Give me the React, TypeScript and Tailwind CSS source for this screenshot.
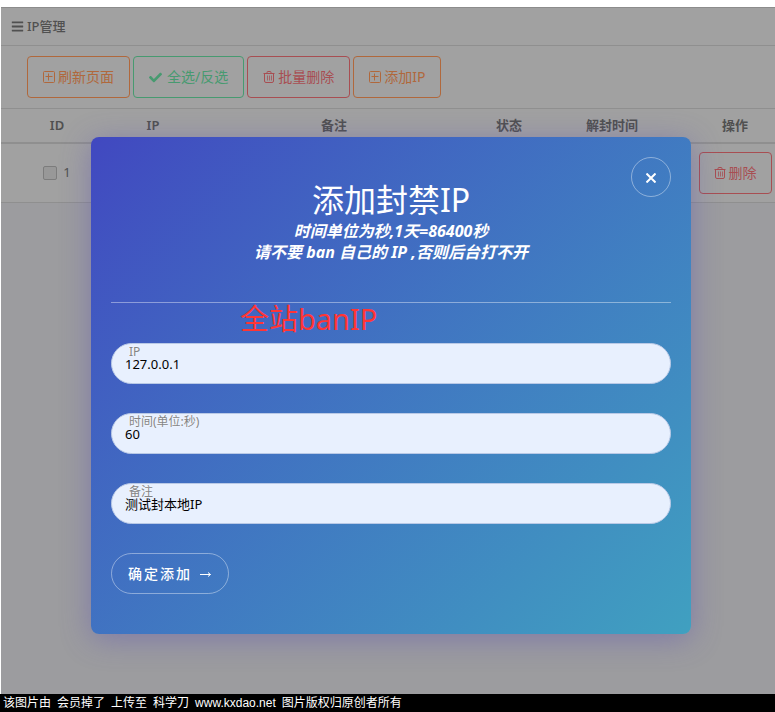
import React from "react";
import { FaBars, FaCheck } from "react-icons/fa";

function PlusBox() {
  return (
    <svg className="size-3 shrink-0" viewBox="0 0 12 12" fill="none" stroke="currentColor" aria-hidden="true">
      <rect x="0.5" y="0.5" width="11" height="11" rx="1" />
      <path d="M5.5 2.5v7M2.5 5.5h7" />
    </svg>
  );
}

function Trash() {
  return (
    <svg className="size-3 shrink-0" viewBox="0 0 12 12" fill="none" stroke="currentColor" aria-hidden="true">
      <path d="M0.5 2.5h11M4 2.5V1.5q0-1 1-1h2q1 0 1 1v1M1.5 2.5v7.5q0 1.5 1.5 1.5h6q1.5 0 1.5-1.5V2.5" />
      <path strokeOpacity="0.75" d="M4.5 4.5v5M6.5 4.5v5M8.5 4.5v5" />
    </svg>
  );
}

type OutlineButtonProps = { tone: string; icon: React.ReactNode; children: React.ReactNode };

function OutlineButton({ tone, icon, children }: OutlineButtonProps) {
  return (
    <button
      type="button"
      className={`inline-flex h-[42px] shrink-0 items-center gap-[3px] rounded border text-sm whitespace-nowrap ${tone}`}
    >
      {icon}
      {children}
    </button>
  );
}

const orange = "px-[15px] border-[#b0683c] text-[#b0683c]";
const green = "px-[15px] border-[#479a70] text-[#479a70]";
const red = "px-[15px] border-[#a84e52] text-[#a84e52]";
const rowRed = "px-[14px] border-[#a84e52] text-[#a84e52]";

type FieldProps = { id: string; label: string; value: string };

function Field({ id, label, value }: FieldProps) {
  return (
    <div className="relative">
      <label
        htmlFor={id}
        className="absolute top-px left-4 px-0.5 text-xs leading-4 text-[#858585] [text-shadow:0_0_2px_white]"
      >
        {label}
      </label>
      <input
        id={id}
        type="text"
        defaultValue={value}
        className="block h-[41px] w-full rounded-full border border-[#b9c9e6] bg-[#e8f0fe] px-[13px] text-[13px] text-black outline-none"
      />
    </div>
  );
}

function AddBanDialog() {
  return (
    <section
      role="dialog"
      aria-labelledby="dialog-title"
      className="relative w-full max-w-[600px] rounded-lg bg-linear-135 from-[#4148c0] to-[#40a0c0] px-5 pb-10 shadow-[0_5px_30px_rgba(90,80,180,0.45)]"
    >
      <button
        type="button"
        aria-label="关闭"
        className="absolute top-5 right-5 flex size-10 items-center justify-center rounded-full border border-white/40 text-white"
      >
        <svg className="mt-0.5 size-[10px]" viewBox="0 0 10 10" stroke="currentColor" strokeWidth="2" aria-hidden="true">
          <path d="M0.5 0.5l9 9M9.5 0.5l-9 9" />
        </svg>
      </button>
      <header className="border-b border-white/40 pt-[42px] pb-[39px] text-center text-white">
        <h1 id="dialog-title" className="text-[32px] leading-[42px]">添加封禁IP</h1>
        <p className="text-base leading-[21px] font-bold italic">
          时间单位为秒,1天=86400秒
          <br />
          请不要 ban 自己的 IP ,否则后台打不开
        </p>
      </header>
      <p className="absolute top-[162px] left-[149px] text-[29px] leading-10 text-[#ff3535]">全站banIP</p>
      <form className="mt-10 flex flex-col items-start gap-[29px] *:w-full" onSubmit={(e) => e.preventDefault()}>
        <Field id="ip" label="IP" value="127.0.0.1" />
        <Field id="duration" label="时间(单位:秒)" value="60" />
        <Field id="remark" label="备注" value="测试封本地IP" />
        <div>
          <button
            type="submit"
            className="flex h-[41px] items-center gap-2 rounded-full border border-white/40 px-4 text-sm font-medium tracking-[2px] whitespace-nowrap text-white"
          >
            确定添加
            <svg className="h-3 w-3" viewBox="0 0 12 12" fill="none" stroke="currentColor" aria-hidden="true">
              <path d="M0 6.5h10.5M8 4.5l2.5 2L8 8.5" />
            </svg>
          </button>
        </div>
      </form>
    </section>
  );
}

export default function App() {
  return (
    <div className="flex min-h-screen flex-col bg-white font-['Noto_Sans','Noto_Sans_CJK_SC',sans-serif]">
      <div className="relative mt-[7px] ml-px flex grow flex-col overflow-hidden border-t border-[#8c8c8c] bg-[#9c9c9f] text-[#505050]">
        <main className="bg-[#a1a1a1]">
          <h2 className="flex h-[38px] items-center gap-[3px] border-b border-[#8f8f8f] pl-[10px] text-[13px] font-medium">
            <FaBars className="size-[13px]" />
            IP管理
          </h2>
          <div className="flex gap-[3px] border-b border-[#8f8f8f] py-[10px] pl-[26px]">
            <OutlineButton tone={orange} icon={<PlusBox />}>刷新页面</OutlineButton>
            <OutlineButton tone={green} icon={<FaCheck className="mr-0.5 size-[13px]" />}>全选/反选</OutlineButton>
            <OutlineButton tone={red} icon={<Trash />}>批量删除</OutlineButton>
            <OutlineButton tone={orange} icon={<PlusBox />}>添加IP</OutlineButton>
          </div>
          <table className="w-full table-fixed border-collapse text-center text-[13px]">
            <thead>
              <tr className="h-[34px] border-b-2 border-[#8f8f8f] *:font-semibold">
                <th className="w-[126px] pr-[14px]">ID</th>
                <th className="w-[52px]">IP</th>
                <th>备注</th>
                <th className="w-10">状态</th>
                <th className="w-[166px]">解封时间</th>
                <th className="w-20">操作</th>
              </tr>
            </thead>
            <tbody>
              <tr className="h-[59px] border-b border-[#8f8f8f]">
                <td className="pr-[14px]">
                  <label className="inline-flex items-center gap-[6px] align-middle">
                    <input
                      type="checkbox"
                      className="size-[14px] appearance-none rounded-[2px] border border-[#7c7c7c] bg-[#989898]"
                    />
                    1
                  </label>
                </td>
                <td />
                <td />
                <td />
                <td />
                <td>
                  <OutlineButton tone={rowRed} icon={<Trash />}>删除</OutlineButton>
                </td>
              </tr>
            </tbody>
          </table>
        </main>
        <div className="absolute inset-0 flex items-start justify-center pt-[129px] pl-[6px]">
          <AddBanDialog />
        </div>
      </div>
      <footer className="flex h-[18px] items-center gap-[6px] bg-black pl-[3px] font-['Liberation_Sans','Noto_Sans_CJK_SC',sans-serif] text-xs leading-[18px] whitespace-nowrap text-white">
        <span>该图片由</span>
        <span>会员掉了</span>
        <span>上传至</span>
        <span>科学刀</span>
        <span>www.kxdao.net</span>
        <span>图片版权归原创者所有</span>
      </footer>
    </div>
  );
}
